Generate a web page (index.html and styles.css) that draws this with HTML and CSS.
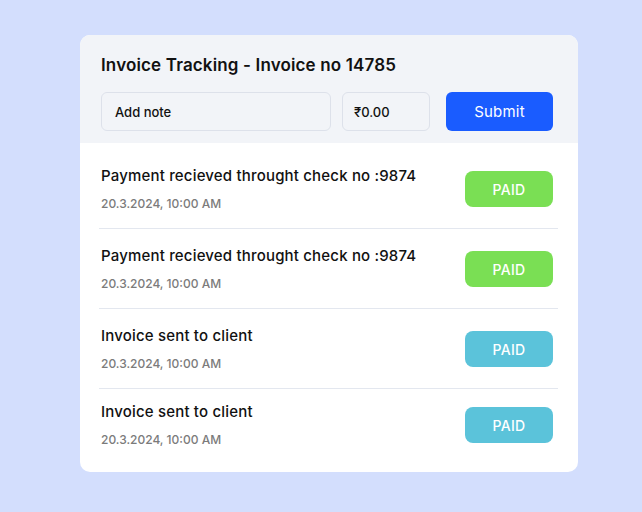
FILE: index.html
```html
<!DOCTYPE html>
<html lang="en">
<head>
<meta charset="utf-8">
<title>Invoice Tracking</title>
<link rel="stylesheet" href="styles.css">
</head>
<body>
<div class="page">
  <div class="card">
    <div class="card-head">
      <h1 class="title">Invoice Tracking - Invoice no 14785</h1>
      <div class="form-row">
        <div class="field field-note">Add note</div>
        <div class="field field-amount">₹0.00</div>
        <button class="btn-submit">Submit</button>
      </div>
    </div>
    <ul class="list">
      <li class="row">
        <div class="row-text">
          <div class="row-title">Payment recieved throught check no :9874</div>
          <div class="row-date">20.3.2024, 10:00 AM</div>
        </div>
        <span class="badge badge-green">PAID</span>
      </li>
      <li class="row">
        <div class="row-text">
          <div class="row-title">Payment recieved throught check no :9874</div>
          <div class="row-date">20.3.2024, 10:00 AM</div>
        </div>
        <span class="badge badge-green">PAID</span>
      </li>
      <li class="row">
        <div class="row-text">
          <div class="row-title">Invoice sent to client</div>
          <div class="row-date">20.3.2024, 10:00 AM</div>
        </div>
        <span class="badge badge-cyan">PAID</span>
      </li>
      <li class="row row-last">
        <div class="row-text">
          <div class="row-title">Invoice sent to client</div>
          <div class="row-date">20.3.2024, 10:00 AM</div>
        </div>
        <span class="badge badge-cyan">PAID</span>
      </li>
    </ul>
  </div>
</div>
</body>
</html>
```
FILE: styles.css
```css
* { box-sizing: border-box; }
html, body { margin: 0; padding: 0; }
body {
  background: #d3defd;
  font-family: Inter, "Noto Sans", sans-serif;
  color: #111;
  width: 642px;
  height: 512px;
}
.page {
  padding: 35px 64px 0 80px;
}
.card {
  width: 498px;
  background: #fff;
  border-radius: 10px;
  overflow: hidden;
}
.card-head {
  background: #f2f4f8;
  padding: 18px 25px 12px 21px;
}
.title {
  margin: 0;
  font-size: 17px;
  line-height: 24px;
  font-weight: 600;
  letter-spacing: 0.15px;
  color: #111;
}
.form-row {
  display: flex;
  margin-top: 15px;
  height: 39px;
}
.field {
  height: 39px;
  border: 1px solid #dde1ea;
  border-radius: 6px;
  background: #f2f4f8;
  display: flex;
  align-items: center;
  font-size: 13px;
  font-weight: 500;
  color: #111;
}
.field-note { width: 230px; padding-left: 13px; }
.field-amount { width: 88px; margin-left: 11px; padding-left: 11px; }
.btn-submit {
  margin-left: 16px;
  width: 107px;
  height: 39px;
  border: 0;
  border-radius: 6px;
  background: #1a5cff;
  color: #fff;
  font-family: inherit;
  font-size: 15px;
  font-weight: 400;
  letter-spacing: 0.2px;
}
.list {
  list-style: none;
  margin: 0;
  padding: 6px 20px 0 19px;
}
.row {
  display: flex;
  align-items: center;
  justify-content: space-between;
  padding: 16px 5px 15px 2px;
  border-bottom: 1px solid #e3e7ef;
}
.row-last {
  border-bottom: 0;
  padding-top: 12px;
  padding-bottom: 23px;
}
.row-title {
  font-size: 15px;
  line-height: 22px;
  font-weight: 500;
  letter-spacing: 0.18px;
  color: #111;
}
.row-date {
  margin-top: 8px;
  font-size: 12px;
  line-height: 18px;
  font-weight: 500;
  color: #7b7b7b;
}
.badge {
  width: 88px;
  height: 36px;
  border-radius: 8px;
  display: flex;
  align-items: center;
  justify-content: center;
  color: #fff;
  font-size: 14px;
  font-weight: 500;
  letter-spacing: 0.3px;
}
.badge-green { background: #7adf54; }
.badge-cyan { background: #5bc3da; }
```
